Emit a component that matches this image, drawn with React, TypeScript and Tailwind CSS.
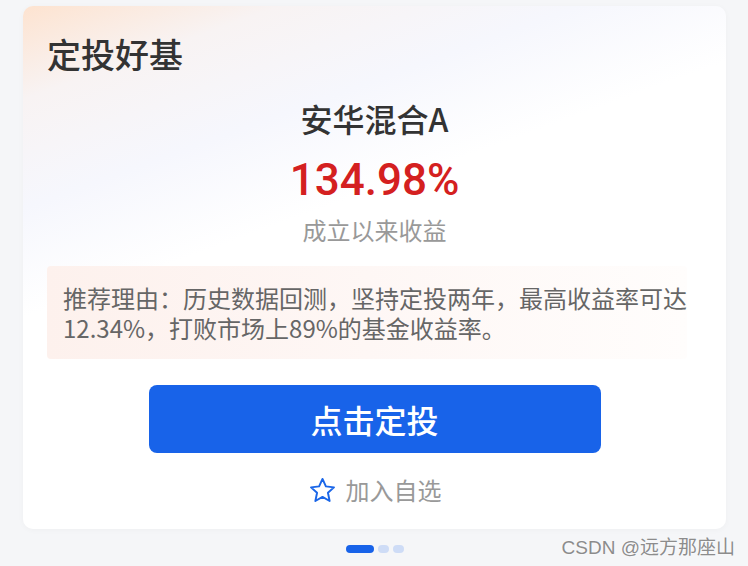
import { useState } from 'react';

const fund = {
  name: '安华混合A',
  rate: '134.98%',
  rateLabel: '成立以来收益',
  reason: '推荐理由：历史数据回测，坚持定投两年，最高收益率可达12.34%，打败市场上89%的基金收益率。',
};

function StarIcon() {
  return (
    <svg width="29" height="29" viewBox="0 0 24 24" fill="none">
      <polygon
        points="12 2.4 14.8 8.6 21.5 9.4 16.5 13.9 17.9 20.7 12 17.3 6.1 20.7 7.5 13.9 2.5 9.4 9.2 8.6"
        stroke="#1a66e8"
        strokeWidth="1.6"
        strokeLinejoin="round"
      />
    </svg>
  );
}

export default function App() {
  const [active] = useState(0);

  return (
    <div className="relative min-h-[566px] bg-[#f5f6f8] pt-[6px] pl-[23px] font-['Noto_Sans_CJK_SC','Noto_Sans',sans-serif]">
      {/* Card */}
      <div className="w-[703px] h-[523px] rounded-[10px] bg-[linear-gradient(160deg,#fde3d0_0%,#f8f3f3_12%,#f6f7fd_26%,#ffffff_40%)] shadow-[0_1px_6px_rgba(0,0,0,0.03)] px-[24px] pt-[24px] flex flex-col">
        <h1 className="text-[34px] leading-[48px] font-medium text-[#333333]">定投好基</h1>

        <div className="flex flex-col items-center">
          <p className="mt-[18px] text-[32px] leading-[44px] font-medium text-[#333333]">{fund.name}</p>
          <p className="mt-[12px] text-[44px] leading-[56px] font-medium text-[#d42020] font-['Roboto','Liberation_Sans',sans-serif]">
            {fund.rate}
          </p>
          <p className="mt-[5px] text-[24px] leading-[34px] text-[#999999]">{fund.rateLabel}</p>
        </div>

        {/* Reason */}
        <div className="mt-[19px] w-[640px] rounded-[4px] bg-[linear-gradient(90deg,#fdf1ed_0%,#fef7f5_50%,#fffdfc_100%)] pl-[16px] pr-0 pt-[17px] pb-[16px]">
          <p className="text-[24px] leading-[30px] text-[#666666]">{fund.reason}</p>
        </div>

        <button className="mt-[26px] mx-auto w-[452px] h-[68px] rounded-[8px] bg-[#1863e9] text-white text-[32px] font-medium flex items-center justify-center">
          点击定投
        </button>

        <div className="mt-[20px] flex items-center justify-center gap-[9px] h-[34px]">
          <StarIcon />
          <span className="text-[24px] leading-[34px] text-[#999999]">加入自选</span>
        </div>
      </div>

      {/* Pager dots */}
      <div className="w-[703px] mt-[16px] flex items-center justify-center gap-[4px]">
        {[0, 1, 2].map((i) =>
          i === active ? (
            <div key={i} className="w-[28px] h-[8px] rounded-full bg-[#1863e9]" />
          ) : (
            <div key={i} className="w-[11px] h-[8px] rounded-full bg-[#cedcf6]" />
          ),
        )}
      </div>

      {/* Watermark */}
      <div className="absolute right-[13px] top-[536px] text-[19px] leading-[24px] text-[#8c8c8c] font-['Liberation_Sans','Noto_Sans_CJK_SC',sans-serif] [text-shadow:0_0_2px_#ffffff]">
        CSDN @远方那座山
      </div>
    </div>
  );
}
